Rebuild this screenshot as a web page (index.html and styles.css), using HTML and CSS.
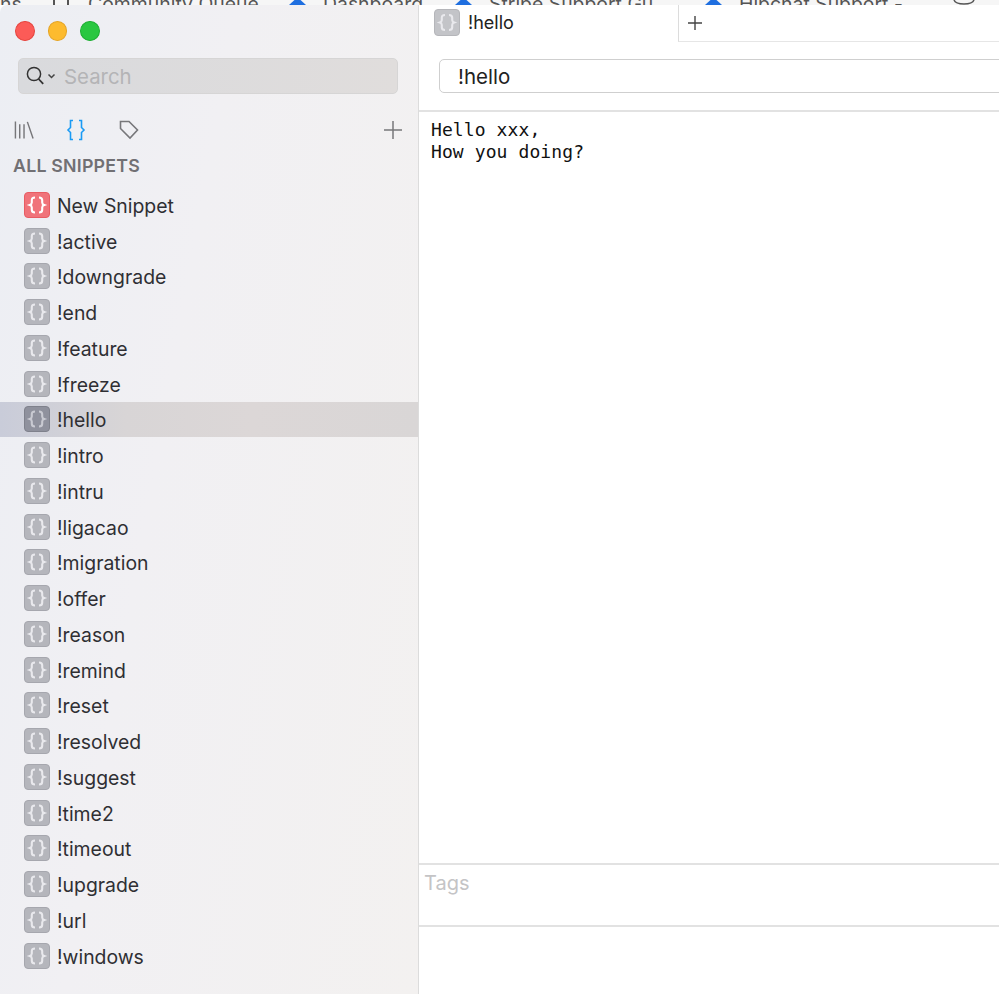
FILE: index.html
```html
<!DOCTYPE html>
<html lang="en">
<head>
<meta charset="utf-8">
<title>Snippets</title>
<link rel="stylesheet" href="styles.css">
</head>
<body>
<svg class="defs" aria-hidden="true">
  <symbol id="brace" viewBox="0 0 24 24">
    <path d="M10 4.500c-2.600 0-3.200 1-3.200 2.800v2.200c0 1.400-.6 2-2 2.500 1.400.5 2 1.100 2 2.500v2.200c0 1.800.6 2.800 3.200 2.800M14 4.500c2.600 0 3.200 1 3.200 2.800v2.200c0 1.400.6 2 2 2.500-1.400.5-2 1.100-2 2.500v2.200c0 1.800-.6 2.800-3.200 2.800" fill="none" stroke="currentColor" stroke-width="2.100"/>
  </symbol>
  <symbol id="tri" viewBox="0 0 17 5">
    <path d="M5.500 0h6L17 5H0z" fill="#1f6fe0"/>
  </symbol>
</svg>
<div class="browser-strip">
  <span class="bt bt-1">ns<i class="bar bar-a"></i><i class="bar bar-b"></i></span>
  <span class="bt bt-2">Community Queue</span>
  <span class="bt bt-3"><svg class="tri"><use href="#tri"/></svg>Dashboard</span>
  <span class="bt bt-4"><svg class="tri"><use href="#tri"/></svg>Stripe Support Gu</span>
  <span class="bt bt-5"><svg class="tri"><use href="#tri"/></svg>Hipchat Support -</span>
  <svg class="gh" viewBox="0 0 26 5"><path d="M3 0c1 2.500 3 4 10 4S22 2.500 23 0" fill="none" stroke="#555" stroke-width="1.500"/></svg>
</div>
<div class="window">
  <aside class="sidebar">
    <div class="lights">
      <span class="light red"></span><span class="light yellow"></span><span class="light green"></span>
    </div>
    <div class="search">
      <svg class="search-icon" viewBox="0 0 32 24"><circle cx="9" cy="10" r="6.600" fill="none" stroke="#333" stroke-width="1.500"/><path d="M13.600 15l4.600 4.800" stroke="#333" stroke-width="1.800" fill="none"/><path d="M23.500 10.500l3 3 3-3" stroke="#444" stroke-width="1.500" fill="none"/></svg>
      <span class="search-text">Search</span>
    </div>
    <div class="toolbar">
      <svg class="tool t-lib" viewBox="0 0 22 20"><path d="M1.500 1v18M6 4v15M10.500 4v15M14 1.500l6 17.500" fill="none" stroke="#77777a" stroke-width="1.500"/></svg>
      <svg class="tool t-brace" viewBox="0 0 20 22"><path d="M7 1.500H4.500v7L2 11l2.500 2.500v7H7M13 1.500h2.500v7L18 11l-2.500 2.500v7H13" fill="none" stroke="#1a9bf5" stroke-width="1.600"/></svg>
      <svg class="tool t-tag" viewBox="0 0 20 20"><path d="M1.500 1.500h8.500l8.500 8.500-7.500 8-9.500-9.500z" fill="none" stroke="#77777a" stroke-width="1.600"/></svg>
      <svg class="tool t-plus" viewBox="0 0 20 20"><path d="M10 1v18M1 10h18" stroke="#77777a" stroke-width="1.500" fill="none"/></svg>
    </div>
    <div class="heading">ALL SNIPPETS</div>
    <ul class="list">
      <li class="row new"><svg class="ico"><use href="#brace"/></svg><span class="label">New Snippet</span></li>
      <li class="row"><svg class="ico"><use href="#brace"/></svg><span class="label">!active</span></li>
      <li class="row"><svg class="ico"><use href="#brace"/></svg><span class="label">!downgrade</span></li>
      <li class="row"><svg class="ico"><use href="#brace"/></svg><span class="label">!end</span></li>
      <li class="row"><svg class="ico"><use href="#brace"/></svg><span class="label">!feature</span></li>
      <li class="row"><svg class="ico"><use href="#brace"/></svg><span class="label">!freeze</span></li>
      <li class="row selected"><svg class="ico"><use href="#brace"/></svg><span class="label">!hello</span></li>
      <li class="row"><svg class="ico"><use href="#brace"/></svg><span class="label">!intro</span></li>
      <li class="row"><svg class="ico"><use href="#brace"/></svg><span class="label">!intru</span></li>
      <li class="row"><svg class="ico"><use href="#brace"/></svg><span class="label">!ligacao</span></li>
      <li class="row"><svg class="ico"><use href="#brace"/></svg><span class="label">!migration</span></li>
      <li class="row"><svg class="ico"><use href="#brace"/></svg><span class="label">!offer</span></li>
      <li class="row"><svg class="ico"><use href="#brace"/></svg><span class="label">!reason</span></li>
      <li class="row"><svg class="ico"><use href="#brace"/></svg><span class="label">!remind</span></li>
      <li class="row"><svg class="ico"><use href="#brace"/></svg><span class="label">!reset</span></li>
      <li class="row"><svg class="ico"><use href="#brace"/></svg><span class="label">!resolved</span></li>
      <li class="row"><svg class="ico"><use href="#brace"/></svg><span class="label">!suggest</span></li>
      <li class="row"><svg class="ico"><use href="#brace"/></svg><span class="label">!time2</span></li>
      <li class="row"><svg class="ico"><use href="#brace"/></svg><span class="label">!timeout</span></li>
      <li class="row"><svg class="ico"><use href="#brace"/></svg><span class="label">!upgrade</span></li>
      <li class="row"><svg class="ico"><use href="#brace"/></svg><span class="label">!url</span></li>
      <li class="row"><svg class="ico"><use href="#brace"/></svg><span class="label">!windows</span></li>
    </ul>
  </aside>
  <main class="main">
    <div class="tabs">
      <div class="tab"><svg class="ico ico-tab"><use href="#brace"/></svg>!hello</div>
      <div class="tab-add"><svg class="add-plus" viewBox="0 0 16 16"><path d="M8 1v14M1 8h14" stroke="#444" stroke-width="1.400" fill="none"/></svg></div>
    </div>
    <div class="title-wrap"><div class="title-input">!hello</div></div>
    <pre class="editor">Hello xxx,
How you doing?</pre>
    <div class="tags">Tags</div>
    <div class="footer"></div>
  </main>
</div>
</body>
</html>
```
FILE: styles.css
```css
* { box-sizing: border-box; }
html, body { margin: 0; padding: 0; }
body {
  width: 999px;
  height: 994px;
  overflow: hidden;
  background: #fff;
  font-family: Inter, "Liberation Sans", sans-serif;
  color: #2f2f33;
}
.defs { width: 0; height: 0; display: block; }

.browser-strip {
  height: 5px;
  overflow: hidden;
  display: flex;
  background: #f6f6f6;
  font-size: 19.400px;
  color: #555;
  white-space: nowrap;
}
.bt { flex: none; height: 5px; display: flex; line-height: 8px; }
.bt-1 { width: 88px; }
.bt-2 { width: 201px; }
.bt-3 { width: 166px; }
.bt-4 { width: 250px; }
.bt-5 { width: 246px; }
.tri { width: 17px; height: 5px; flex: none; margin-right: 17px; }
.bar { display: block; width: 2px; height: 5px; background: #555; flex: none; }
.bar-a { margin-left: 31px; }
.bar-b { margin-left: 12px; }
.gh { width: 26px; height: 5px; flex: none; }

.window { display: flex; height: 989px; }

.sidebar {
  width: 419px;
  flex: none;
  border-right: 1px solid #dcdcdc;
  border-top-left-radius: 7px;
  background: linear-gradient(100deg, #eceef3 0%, #f1f0f3 40%, #f3f1f0 100%);
  overflow: hidden;
}
.lights { display: flex; gap: 13px; padding: 16px 0 0 15px; }
.light { width: 19.500px; height: 20px; border-radius: 50%; display: block; }
.red { background: #fc5b57; border: 1px solid #e5453f; }
.yellow { background: #fdbb2e; border: 1px solid #e5a424; }
.green { background: #29c740; border: 1px solid #1eae33; }

.search {
  margin: 17px 20px 0 18px;
  height: 36px;
  display: flex;
  align-items: center;
  padding-left: 6px;
  gap: 7px;
  border: 1px solid #d6d5d5;
  border-radius: 5px;
  background: linear-gradient(90deg, #d9dadd, #e0dddc);
}
.search-icon { width: 32px; height: 24px; flex: none; }
.search-text { font-size: 20.400px; color: #b4b4b6; padding-top: 1px; }

.toolbar { display: flex; align-items: center; height: 24px; margin-top: 24px; padding-left: 14px; }
.tool { display: block; flex: none; }
.t-lib { width: 21px; height: 20px; }
.t-brace { width: 20px; height: 22px; margin-left: 31px; }
.t-tag { width: 20px; height: 20px; margin-left: 33px; }
.t-plus { width: 20px; height: 20px; margin-left: auto; margin-right: 15px; }

.heading {
  margin: 13px 0 0 13px;
  font-size: 17.800px;
  line-height: 22px;
  font-weight: 600;
  letter-spacing: 0.2px;
  color: #717074;
}

.list { list-style: none; margin: 10px 0 0; padding: 0; }
.row {
  height: 35.760px;
  display: flex;
  align-items: center;
  padding-left: 24px;
  gap: 7px;
  font-size: 19.400px;
}
.label { padding-top: 2px; }
.selected { background: linear-gradient(90deg, #c9ccd9, #d8d5d6 30%, #dcd7d7 60%, #d9d6d6); }

.ico {
  width: 26px;
  height: 26px;
  flex: none;
  border-radius: 4px;
  background: #b5b6bc;
  border: 1px solid #a6a7ae;
  color: #e9e9ed;
}
.new .ico { background: #f0737a; border-color: #e85c63; color: #fff; }
.selected .ico { background: #8f919d; border-color: #7f818c; color: #c9cad2; }

.main { flex: 1; min-width: 0; display: flex; flex-direction: column; background: #fff; }
.tabs { display: flex; height: 37px; flex: none; }
.tab { width: 259px; display: flex; align-items: center; gap: 8px; padding-left: 15px; padding-bottom: 2px; font-size: 18px; color: #222; }
.ico-tab { width: 26px; height: 27px; background: #c3c4c8; border-color: #b5b6ba; }
.tab-add { flex: 1; border-left: 1px solid #dcdcdc; border-bottom: 1px solid #e6e6e6; padding-left: 8px; display: flex; align-items: center; }
.add-plus { width: 16px; height: 16px; display: block; }

.title-wrap { height: 70px; flex: none; padding: 17px 0 0 20px; border-bottom: 2px solid #e2e2e2; }
.title-input {
  height: 34px;
  width: 600px;
  border: 1px solid #cfcfcf;
  border-radius: 5px;
  padding-left: 18px;
  font-size: 20.500px;
  line-height: 34px;
  color: #222;
}

.editor {
  flex: 1;
  margin: 0;
  padding: 7px 0 0 12px;
  font-family: "DejaVu Sans Mono", monospace;
  font-size: 18px;
  letter-spacing: 0.1px;
  line-height: 21.500px;
  color: #111;
}
.tags {
  height: 64px;
  flex: none;
  border-top: 2px solid #e2e2e2;
  border-bottom: 2px solid #e2e2e2;
  padding: 5px 0 0 5px;
  font-size: 20px;
  line-height: 26px;
  color: #c4c4c6;
}
.footer { height: 67px; flex: none; }
```
